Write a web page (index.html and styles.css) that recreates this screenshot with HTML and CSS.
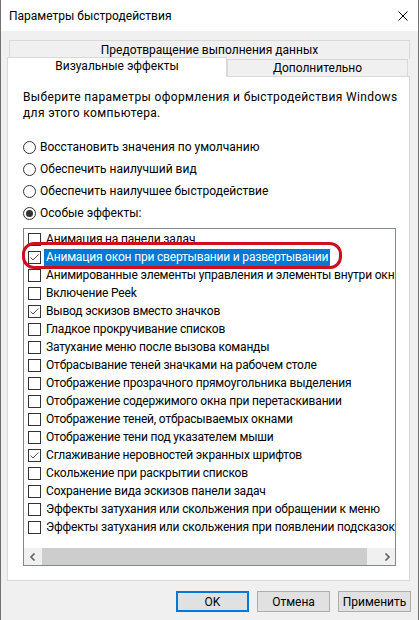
FILE: index.html
```html
<!DOCTYPE html>
<html lang="ru">
<head>
  <meta charset="UTF-8">
  <meta name="viewport" content="width=device-width, initial-scale=1.0">
  <title>Параметры быстродействия</title>
  <link rel="stylesheet" href="styles.css">
</head>
<body>
  <div class="window">
    <div class="titlebar">
      <span class="title">Параметры быстродействия</span>
      <svg class="close" width="10" height="10" viewBox="0 0 10 10">
        <path d="M0.5 0.5 L9.5 9.5 M9.5 0.5 L0.5 9.5" stroke="#000" stroke-width="1" fill="none"/>
      </svg>
    </div>

    <div class="content">
      <div class="tabs">
        <div class="tab tab-back">Предотвращение выполнения данных</div>
        <div class="tab-row">
          <div class="tab tab-active">Визуальные эффекты</div>
          <div class="tab tab-other">Дополнительно</div>
        </div>
      </div>

      <div class="panel">
        <p class="intro">Выберите параметры оформления и быстродействия Windows<br>для этого компьютера.</p>

        <div class="radios">
          <div class="radio"><span class="radio-box"></span>Восстановить значения по умолчанию</div>
          <div class="radio"><span class="radio-box"></span>Обеспечить наилучший вид</div>
          <div class="radio"><span class="radio-box"></span>Обеспечить наилучшее быстродействие</div>
          <div class="radio"><span class="radio-box checked"></span>Особые эффекты:</div>
        </div>

        <div class="listbox">
          <div class="items">
            <div class="item"><span class="check"></span><span class="text">Анимация на панели задач</span></div>
            <div class="item"><span class="check"><svg width="11" height="11" viewBox="0 0 11 11"><path d="M1.5 5.5 L4 8 L9.5 2.5" stroke="#555" fill="none"/></svg></span><span class="text selected">Анимация окон при свертывании и развертывании</span></div>
            <div class="item"><span class="check"></span><span class="text">Анимированные элементы управления и элементы внутри окна</span></div>
            <div class="item"><span class="check"></span><span class="text">Включение Peek</span></div>
            <div class="item"><span class="check"><svg width="11" height="11" viewBox="0 0 11 11"><path d="M1.5 5.5 L4 8 L9.5 2.5" stroke="#555" fill="none"/></svg></span><span class="text">Вывод эскизов вместо значков</span></div>
            <div class="item"><span class="check"></span><span class="text">Гладкое прокручивание списков</span></div>
            <div class="item"><span class="check"></span><span class="text">Затухание меню после вызова команды</span></div>
            <div class="item"><span class="check"></span><span class="text">Отбрасывание теней значками на рабочем столе</span></div>
            <div class="item"><span class="check"></span><span class="text">Отображение прозрачного прямоугольника выделения</span></div>
            <div class="item"><span class="check"></span><span class="text">Отображение содержимого окна при перетаскивании</span></div>
            <div class="item"><span class="check"></span><span class="text">Отображение теней, отбрасываемых окнами</span></div>
            <div class="item"><span class="check"></span><span class="text">Отображение тени под указателем мыши</span></div>
            <div class="item"><span class="check"><svg width="11" height="11" viewBox="0 0 11 11"><path d="M1.5 5.5 L4 8 L9.5 2.5" stroke="#555" fill="none"/></svg></span><span class="text">Сглаживание неровностей экранных шрифтов</span></div>
            <div class="item"><span class="check"></span><span class="text">Скольжение при раскрытии списков</span></div>
            <div class="item"><span class="check"></span><span class="text">Сохранение вида эскизов панели задач</span></div>
            <div class="item"><span class="check"></span><span class="text">Эффекты затухания или скольжения при обращении к меню</span></div>
            <div class="item"><span class="check"></span><span class="text">Эффекты затухания или скольжения при появлении подсказок</span></div>
          </div>

          <div class="hscroll">
            <div class="arrow">
              <svg width="8" height="8" viewBox="0 0 8 8"><path d="M5.5 0.5 L2 4 L5.5 7.5" stroke="#606060" stroke-width="1.6" fill="none"/></svg>
            </div>
            <div class="thumb"></div>
            <div class="arrow arrow-right">
              <svg width="8" height="8" viewBox="0 0 8 8"><path d="M2.5 0.5 L6 4 L2.5 7.5" stroke="#606060" stroke-width="1.6" fill="none"/></svg>
            </div>
          </div>

          <!-- red highlight drawn over the list -->
          <div class="mark"></div>
        </div>
      </div>

      <div class="buttons">
        <button class="btn btn-default">OK</button>
        <button class="btn">Отмена</button>
        <button class="btn">Применить</button>
      </div>
    </div>
  </div>
</body>
</html>
```

FILE: styles.css
```css
body {
  margin: 0;
  font-family: Roboto, "Noto Sans", Arial, sans-serif;
  font-size: 12px;
  color: #000;
}
.window {
  width: 419px;
  height: 620px;
  box-sizing: border-box;
  border-left: 1px solid #707070;
  border-right: 1px solid #707070;
  overflow: hidden;
}
.titlebar {
  height: 31px;
  background-color: #fff;
  display: flex;
  align-items: center;
  justify-content: space-between;
  padding: 0 10px 0 8px;
}
.close {
  display: block;
}
.content {
  height: 589px;
  box-sizing: border-box;
  background-color: #f0f0f0;
  padding: 9px 7px 0 6px;
}

/* Tabs */
.tab {
  box-sizing: border-box;
  border: 1px solid #d9d9d9;
  border-bottom: none;
  text-align: center;
  white-space: nowrap;
}
.tab-back {
  margin-left: 2px;
  width: 401px;
  height: 19px;
  line-height: 18px;
  background-color: #f0f0f0;
}
.tab-row {
  display: flex;
  align-items: flex-start;
  margin-top: -2px;
  position: relative;
  z-index: 1;
}
.tab-active {
  width: 220px;
  height: 20px;
  line-height: 17px;
  background-color: #fff;
}
.tab-other {
  width: 181px;
  height: 17px;
  margin-top: 2px;
  line-height: 16px;
  background-color: #f0f0f0;
}

/* Panel */
.panel {
  margin-top: -1px;
  width: 403px;
  height: 505px;
  box-sizing: border-box;
  border: 1px solid #d9d9d9;
  background-color: #fff;
  padding: 12px 0 0 15px;
}
.intro {
  margin: 0;
  line-height: 16px;
  letter-spacing: 0.35px;
}
.radios {
  margin-top: 15px;
}
.radio {
  height: 22px;
  display: flex;
  align-items: center;
}
.radio-box {
  width: 13px;
  height: 13px;
  box-sizing: border-box;
  border: 1px solid #333;
  border-radius: 50%;
  margin-right: 4px;
  display: flex;
  align-items: center;
  justify-content: center;
}
.radio-box.checked::after {
  content: "";
  width: 7px;
  height: 7px;
  border-radius: 50%;
  background-color: #333;
}

/* List of effects */
.listbox {
  margin-top: 4px;
  width: 373px;
  height: 338px;
  box-sizing: border-box;
  border: 1px solid #828790;
  position: relative;
  display: flex;
  flex-direction: column;
}
.items {
  flex: 1;
  padding-top: 1px;
  overflow: hidden;
}
.item {
  height: 18px;
  display: flex;
  align-items: center;
  padding-left: 4px;
  white-space: nowrap;
}
.check {
  flex: none;
  width: 13px;
  height: 13px;
  box-sizing: border-box;
  border: 1px solid #333;
  margin-right: 3px;
  display: flex;
  align-items: center;
  justify-content: center;
}
.check svg {
  display: block;
}
.text {
  padding: 0 2px;
  line-height: 17px;
  letter-spacing: -0.18px;
}
.text.selected {
  background-color: #0078d7;
  color: #fff;
}
.hscroll {
  flex: none;
  height: 17px;
  display: flex;
  background-color: #f0f0f0;
}
.arrow {
  width: 17px;
  display: flex;
  align-items: center;
  justify-content: center;
}
.arrow-right {
  margin-left: auto;
}
.thumb {
  margin-left: 1px;
  width: 325px;
  background-color: #cdcdcd;
}
.mark {
  position: absolute;
  left: -2px;
  top: 13px;
  width: 320px;
  height: 27px;
  box-sizing: border-box;
  border: 3px solid #cc1020;
  border-radius: 12px;
}

/* Dialog buttons */
.buttons {
  margin-top: 10px;
  display: flex;
  justify-content: flex-end;
  gap: 8px;
}
.btn {
  width: 73px;
  height: 21px;
  padding: 0;
  border: 1px solid #adadad;
  background-color: #e1e1e1;
  font-family: inherit;
  font-size: 12px;
  color: #000;
}
.btn-default {
  border-color: #0078d7;
  box-shadow: inset 0 0 0 1px #0078d7;
}
```
